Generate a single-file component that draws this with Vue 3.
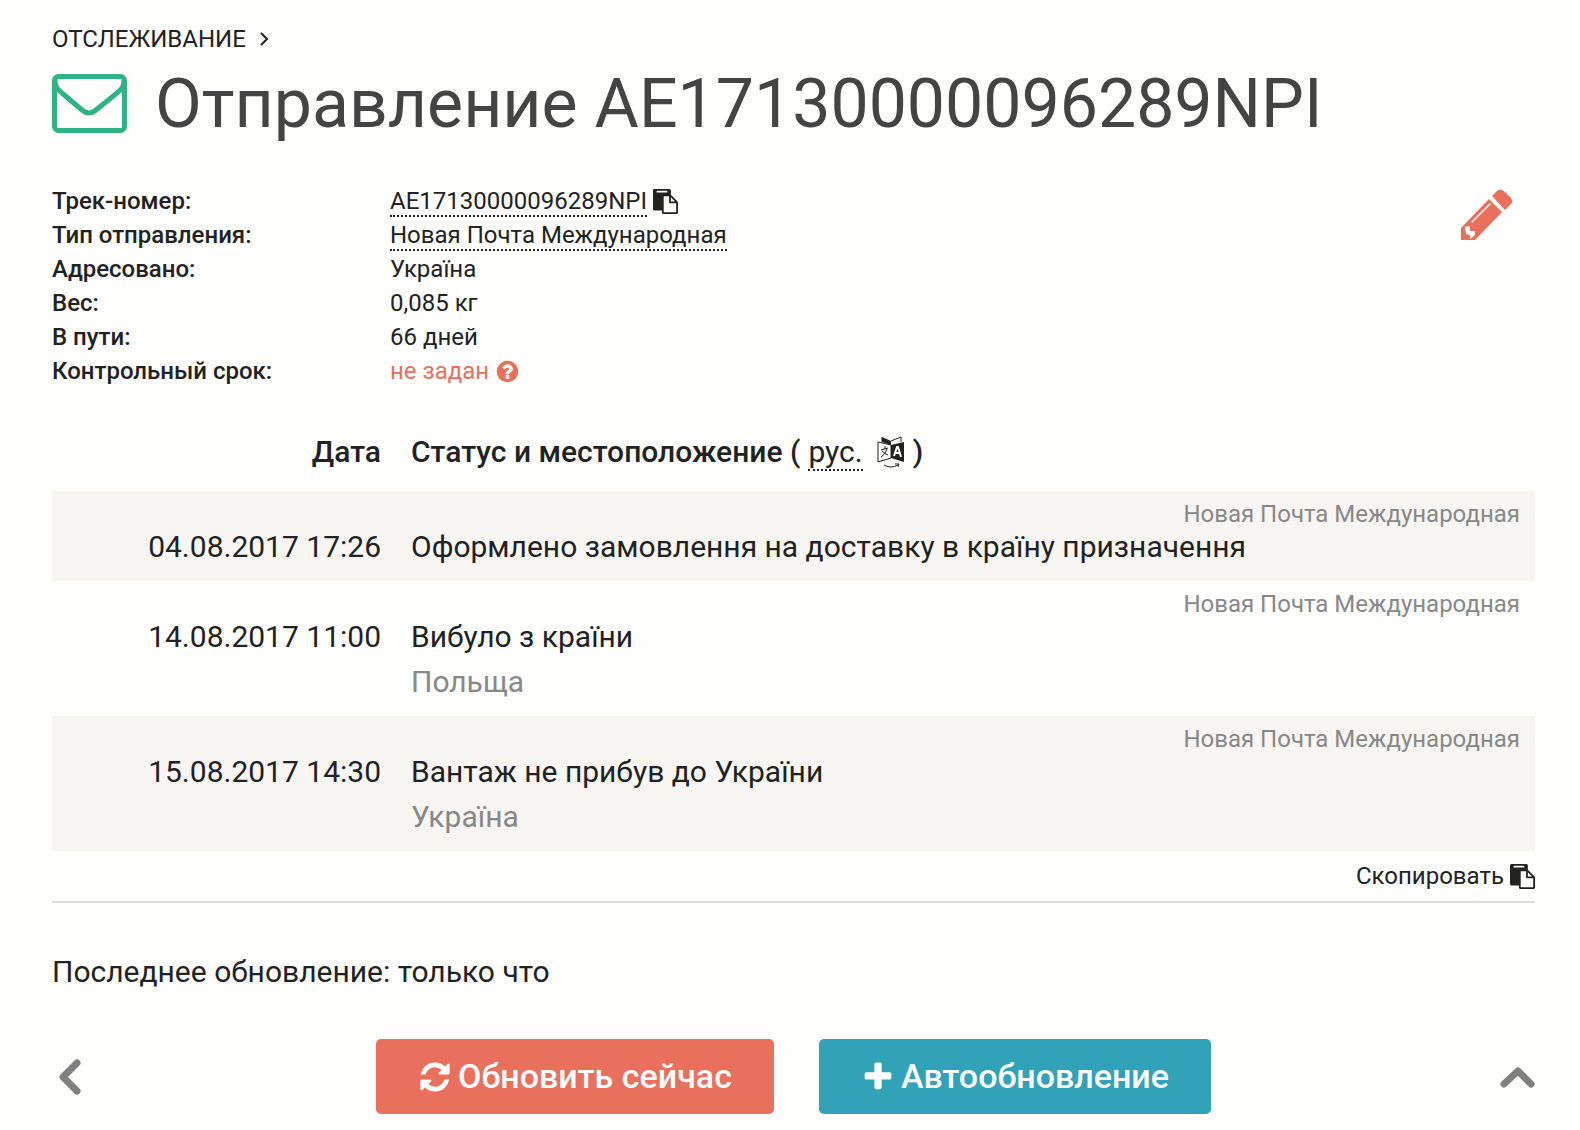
<script setup>
const clipboardPath =
  'M768 1664h896v-640h-416q-40 0-68-28t-28-68v-416h-384v1152zm256-1440v-64q0-13-9.5-22.5t-22.5-9.5h-704q-13 0-22.5 9.5t-9.5 22.5v64q0 13 9.5 22.5t22.5 9.5h704q13 0 22.5-9.5t9.5-22.5zm256 672h299l-299-299v299zm512 128v672q0 40-28 68t-68 28h-960q-40 0-68-28t-28-68v-160h-544q-40 0-68-28t-28-68v-1344q0-40 28-68t68-28h1088q40 0 68 28t28 68v328q21 13 36 28l408 408q28 28 48 76t20 88z'

const provider = 'Новая Почта Международная'

const events = [
  { date: '04.08.2017 17:26', status: 'Оформлено замовлення на доставку в країну призначення' },
  { date: '14.08.2017 11:00', status: 'Вибуло з країни', place: 'Польща' },
  { date: '15.08.2017 14:30', status: 'Вантаж не прибув до України', place: 'Україна' },
]
</script>

<template>
  <main class="page">
    <nav class="crumbs">
      <a href="#">ОТСЛЕЖИВАНИЕ</a>
      <svg width="9" height="14" viewBox="0 0 9 14" aria-hidden="true">
        <path d="M1 1l6 6-6 6" fill="none" stroke="currentColor" stroke-width="2" />
      </svg>
    </nav>

    <header class="title">
      <svg width="75" height="60" viewBox="0 0 75 60" aria-hidden="true">
        <rect x="2.5" y="2.5" width="70" height="54" rx="4" />
        <path d="M3 6c0 7 3 10 7 13l20 17q7 6 14 0l21-17c4-3 7-6 7-13" />
      </svg>
      <h1>Отправление AE17130000096289NPI</h1>
    </header>

    <section class="summary">
      <dl>
        <dt>Трек-номер:</dt>
        <dd>
          <a class="dotted" href="#">AE17130000096289NPI</a>
          <button class="icon-button" type="button" aria-label="Скопировать трек-номер">
            <svg width="25" height="25" viewBox="0 0 1792 1792"><path :d="clipboardPath" fill="currentColor" /></svg>
          </button>
        </dd>
        <dt>Тип отправления:</dt>
        <dd><a class="dotted" href="#">{{ provider }}</a></dd>
        <dt>Адресовано:</dt>
        <dd>Україна</dd>
        <dt>Вес:</dt>
        <dd>0,085 кг</dd>
        <dt>В пути:</dt>
        <dd>66 дней</dd>
        <dt>Контрольный срок:</dt>
        <dd class="alert">
          <a href="#">не задан</a>
          <svg width="25" height="25" viewBox="0 0 1792 1792" aria-hidden="true">
            <path fill="currentColor" d="M1024 1376v-192q0-14-9-23t-23-9h-192q-14 0-23 9t-9 23v192q0 14 9 23t23 9h192q14 0 23-9t9-23zm256-672q0-88-55.5-163t-138.5-116-170-41q-243 0-371 213-15 24 8 42l132 100q7 6 19 6 16 0 25-12 53-68 86-92 34-24 86-24 48 0 85.5 26t37.5 59q0 38-20 61t-68 45q-63 28-115.5 86.5t-52.5 125.5v36q0 14 9 23t23 9h192q14 0 23-9t9-23q0-19 21.5-49.5t54.5-49.5q32-18 49-28.5t46-35 44.5-48 28-60.5 12.5-81zm384 192q0 209-103 385.5t-279.5 279.5-385.5 103-385.5-103-279.5-279.5-103-385.5 103-385.5 279.5-279.5 385.5-103 385.5 103 279.5 279.5 103 385.5z" />
          </svg>
        </dd>
      </dl>
      <button class="icon-button edit" type="button" aria-label="Редактировать">
        <svg width="52" height="52" viewBox="0 0 52 52">
          <path fill="currentColor" fill-rule="evenodd" d="M0 51V39L28 10L41 23L14 51ZM4 38L5 45L9 46L9 50L14 46L14 42L9 42L9 37Z" />
          <path fill="currentColor" d="M31 7l5-5q3-3 7 0l6 6q4 4 1 7l-6 6Z" />
          <path d="M11 33L29 15" stroke="#fefefd" stroke-width="1.5" stroke-linecap="round" />
        </svg>
      </button>
    </section>

    <table class="events">
      <thead>
        <tr>
          <th class="date">Дата</th>
          <th>
            <span class="heading">
              <span>Статус и местоположение (</span>
              <a class="dotted lang" href="#">рус.</a>
              <svg width="28" height="32" viewBox="0 0 28 32" aria-hidden="true">
                <path d="M5 1L14 5V9L5 6ZM14 9L27 6V26L14 22Z" fill="currentColor" />
                <path d="M14 5L24 1V6M1 6L14 9V22L1 26ZM5 6V1M7 29Q14 33 21 29M18 28l4 0-1 3" fill="none" stroke="currentColor" stroke-width="1" />
                <path d="M4 14l7-2M8 10v3M10 13Q8 19 4 21M5 15Q8 18 11 19" fill="none" stroke="currentColor" stroke-width="1" />
                <path d="M17 20L20 11H21L24 21M18 17H23" fill="none" stroke="#fefefd" stroke-width="2" />
              </svg>
              <span>)</span>
            </span>
          </th>
        </tr>
      </thead>
      <tbody>
        <tr v-for="event in events" :key="event.date">
          <td class="date">{{ event.date }}</td>
          <td>
            <div class="provider">{{ provider }}</div>
            <div>{{ event.status }}</div>
            <div v-if="event.place" class="place">{{ event.place }}</div>
          </td>
        </tr>
      </tbody>
    </table>

    <div class="copy">
      <button class="icon-button" type="button">
        Скопировать
        <svg width="25" height="25" viewBox="0 0 1792 1792" aria-hidden="true"><path :d="clipboardPath" fill="currentColor" /></svg>
      </button>
    </div>

    <p class="updated">Последнее обновление: только что</p>

    <footer class="actions">
      <button class="icon-button arrow" type="button" aria-label="Назад">
        <svg width="36" height="36" viewBox="0 0 36 36"><path d="M25 4L11 18L25 32" /></svg>
      </button>
      <div class="buttons">
        <button class="action refresh" type="button">
          <svg width="34" height="34" viewBox="0 0 1792 1792" aria-hidden="true">
            <path fill="currentColor" d="M1639 1056q0 5-1 7-64 268-268 434.5t-478 166.5q-146 0-282.5-55t-243.5-157l-129 129q-19 19-45 19t-45-19-19-45v-448q0-26 19-45t45-19h448q26 0 45 19t19 45-19 45l-137 137q71 66 161 102t187 36q134 0 250-65t186-179q11-17 53-117 8-23 30-23h192q13 0 22.5 9.5t9.5 22.5zm25-800v448q0 26-19 45t-45 19h-448q-26 0-45-19t-19-45 19-45l138-138q-148-137-349-137-134 0-250 65t-186 179q-11 17-53 117-8 23-30 23h-199q-13 0-22.5-9.5t-9.5-22.5v-7q65-268 270-434.5t480-166.5q146 0 284 55.5t245 156.5l130-129q19-19 45-19t45 19 19 45z" />
          </svg>
          Обновить сейчас
        </button>
        <button class="action auto" type="button">
          <svg width="34" height="34" viewBox="0 0 1792 1792" aria-hidden="true">
            <path fill="currentColor" d="M1600 736v192q0 40-28 68t-68 28h-416v416q0 40-28 68t-68 28h-192q-40 0-68-28t-28-68v-416h-416q-40 0-68-28t-28-68v-192q0-40 28-68t68-28h416v-416q0-40 28-68t68-28h192q40 0 68 28t28 68v416h416q40 0 68 28t28 68z" />
          </svg>
          Автообновление
        </button>
      </div>
      <button class="icon-button arrow" type="button" aria-label="Наверх">
        <svg width="36" height="36" viewBox="0 0 36 36"><path d="M5 25L19 12L32 25" /></svg>
      </button>
    </footer>
  </main>
</template>

<style>
body {
  background: #fefefd;
}
</style>

<style scoped>
.page {
  padding: 22px 45px 16px 52px;
  color: #222;
  font: 24px/34px Roboto, sans-serif;
}

a {
  color: inherit;
  text-decoration: none;
}

svg {
  flex: none;
  display: block;
}

.icon-button {
  display: flex;
  align-items: center;
  gap: 6px;
  padding: 0;
  border: 0;
  background: none;
  color: inherit;
  font: inherit;
  cursor: pointer;
}

.dotted {
  padding-top: 2px;
  border-bottom: 2px dotted #222;
  line-height: 28px;
}

.crumbs {
  display: flex;
  align-items: center;
  gap: 14px;
}

.title {
  display: flex;
  align-items: center;
  gap: 28px;
  margin-top: 2px;
}

.title svg {
  fill: none;
  stroke: #2eb386;
  stroke-width: 5;
}

h1 {
  margin: 0;
  color: #444;
  font-size: 68px;
  font-weight: 400;
  line-height: 92px;
}

.summary {
  display: flex;
  align-items: flex-start;
  justify-content: space-between;
  margin-top: 34px;
}

dl {
  display: grid;
  grid-template-columns: 338px auto;
  margin: 0;
}

dt {
  font-weight: 500;
}

dd {
  display: flex;
  align-items: center;
  gap: 6px;
  height: 34px;
  margin: 0;
}

.alert,
.edit {
  color: #e8705d;
}

.edit {
  margin: 5px 22px 0 0;
}

.events {
  width: 100%;
  margin-top: 23px;
  border-collapse: collapse;
  font-size: 30px;
  line-height: 45px;
}

th {
  padding: 18px 15px 17px;
  font-weight: 500;
  text-align: left;
}

td {
  padding: 13px 15px 12px;
  vertical-align: top;
}

.date {
  width: 314px;
  text-align: right;
}

td.date {
  padding-top: 33px;
}

tbody tr:nth-child(odd) {
  background: #f7f6f3;
}

.heading {
  display: flex;
  align-items: center;
  gap: 8px;
}

.lang {
  margin-right: 6px;
  font-weight: 400;
  line-height: 34px;
}

.provider {
  color: #888;
  font-size: 24px;
  line-height: 20px;
  text-align: right;
}

.place {
  color: #888;
}

.copy {
  display: flex;
  justify-content: flex-end;
  padding: 8px 0;
  border-bottom: 2px solid #ddd;
}

.updated {
  margin: 46px 0 0;
  font-size: 30px;
  line-height: 45px;
}

.actions {
  display: flex;
  align-items: center;
  justify-content: space-between;
  margin-top: 45px;
}

.arrow path {
  fill: none;
  stroke: #808080;
  stroke-width: 7;
  stroke-linecap: round;
  stroke-linejoin: round;
}

.buttons {
  display: flex;
  gap: 45px;
}

.action {
  display: flex;
  align-items: center;
  gap: 6px;
  height: 75px;
  padding: 0 42px;
  border: 0;
  border-radius: 5px;
  color: #fff;
  font: 500 34px/45px Roboto, sans-serif;
  cursor: pointer;
}

.refresh {
  background: #e8705d;
}

.auto {
  background: #31a2b8;
}
</style>
